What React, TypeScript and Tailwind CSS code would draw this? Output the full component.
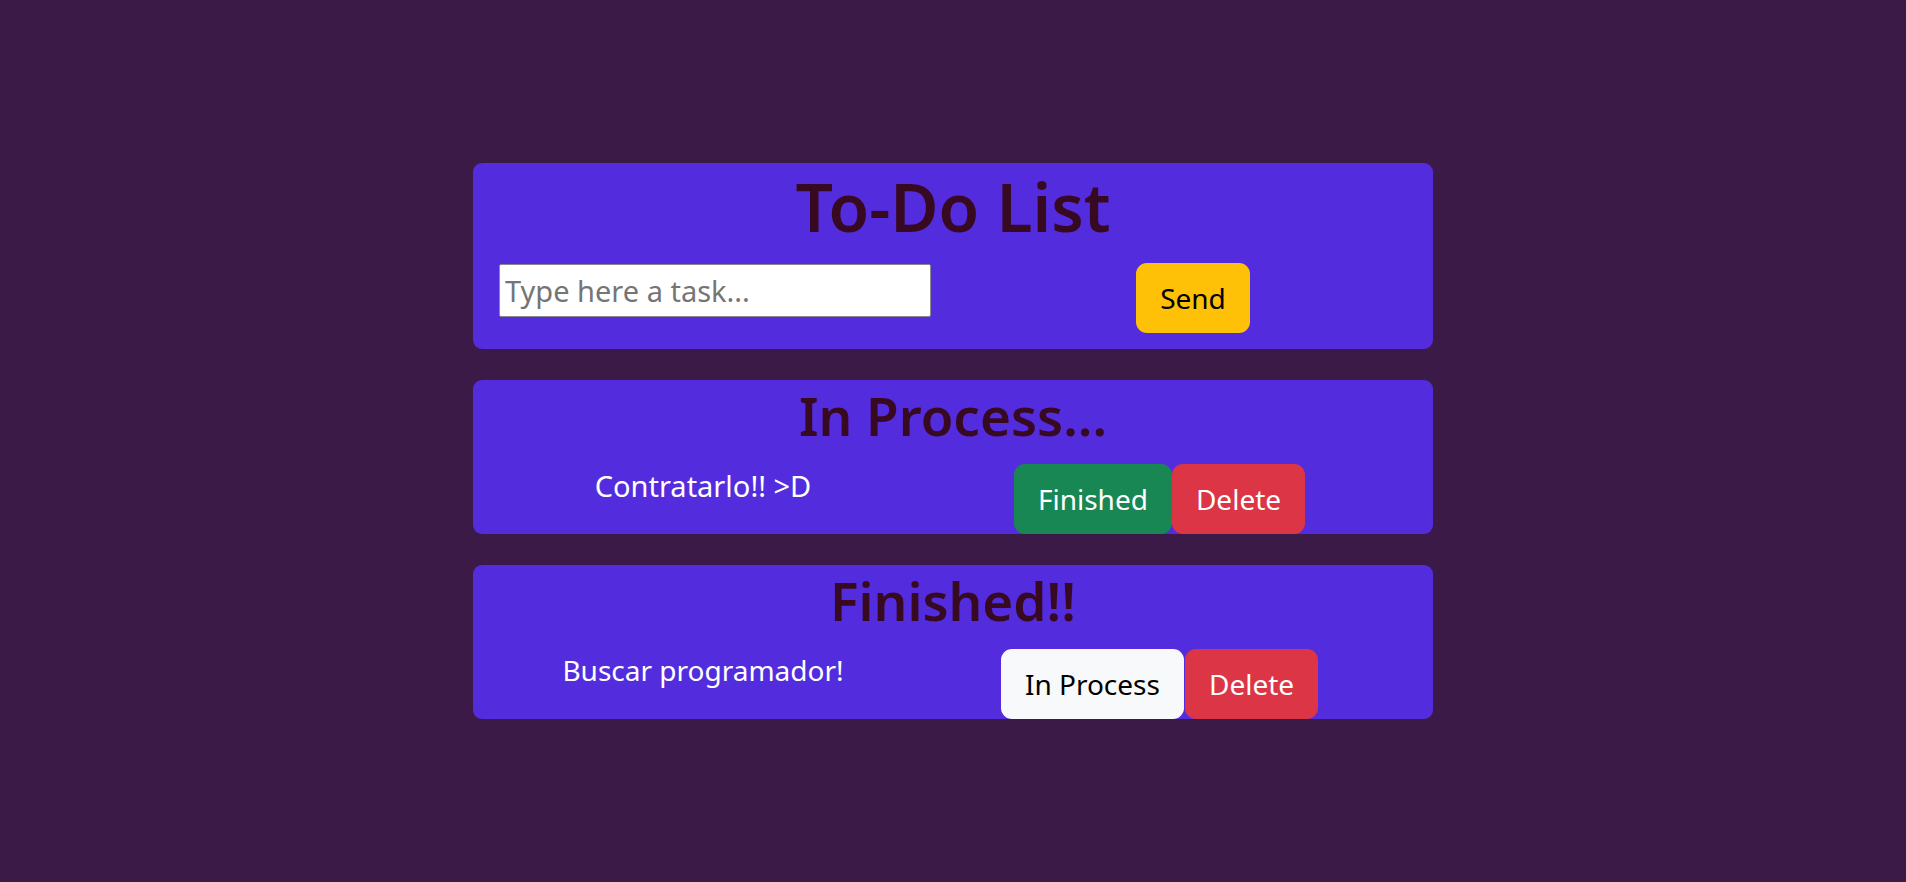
import React from "react";

const font = { fontFamily: '"Noto Sans", "Open Sans", sans-serif' };

export default function App() {
  return (
    <div
      className="min-h-[882px] w-full bg-[#3c1a48] pt-[163px] font-['Noto_Sans',_'Open_Sans',_sans-serif]"
      style={font}
    >
      <div className="mx-auto flex w-[960px] flex-col gap-[31px]">
        {/* To-Do List card */}
        <div className="rounded-[9px] bg-[#532ddd] pb-[16px]">
          <h1 className="mb-[14px] text-center text-[66px] font-semibold leading-[86px] text-[#370a22]">
            To-Do List
          </h1>
          <div className="grid grid-cols-2">
            <div className="pl-[26px] pt-px">
              <input
                type="text"
                placeholder="Type here a task..."
                className="box-border h-[53px] w-[432px] rounded-[2px] border border-[#8a8a8a] bg-white px-[5px] text-[29px] text-black outline-none placeholder:text-[#757575]"
              />
            </div>
            <div className="flex justify-center">
              <button className="h-[70px] rounded-[11px] bg-[#ffc107] px-[24px] text-[28px] leading-[1.5] text-black">
                Send
              </button>
            </div>
          </div>
        </div>

        {/* In Process card */}
        <div className="rounded-[9px] bg-[#532ddd]">
          <h1 className="mb-[12px] text-center text-[53px] font-semibold leading-[72px] text-[#370a22]">
            In Process...
          </h1>
          <div className="grid grid-cols-[460px_453px_1fr] items-start">
            <div className="text-center text-[29px] leading-[1.5] text-white">
              Contratarlo!! &gt;D
            </div>
            <div className="flex justify-center">
              <button className="h-[70px] rounded-[11px] bg-[#198754] px-[24px] text-[28px] leading-[1.5] text-white">
                Finished
              </button>
              <button className="h-[70px] rounded-[11px] bg-[#dc3545] px-[24px] text-[28px] leading-[1.5] text-white">
                Delete
              </button>
            </div>
            <div />
          </div>
        </div>

        {/* Finished card */}
        <div className="rounded-[9px] bg-[#532ddd]">
          <h1 className="mb-[12px] text-center text-[53px] font-semibold leading-[72px] text-[#370a22]">
            Finished!!
          </h1>
          <div className="grid grid-cols-[460px_453px_1fr] items-start">
            <div className="text-center text-[28px] leading-[1.5] text-white">
              Buscar programador!
            </div>
            <div className="flex justify-center gap-px">
              <button className="h-[70px] rounded-[11px] bg-[#f8f9fa] px-[24px] text-[28px] leading-[1.5] text-black">
                In Process
              </button>
              <button className="h-[70px] rounded-[11px] bg-[#dc3545] px-[24px] text-[28px] leading-[1.5] text-white">
                Delete
              </button>
            </div>
            <div />
          </div>
        </div>
      </div>
    </div>
  );
}
